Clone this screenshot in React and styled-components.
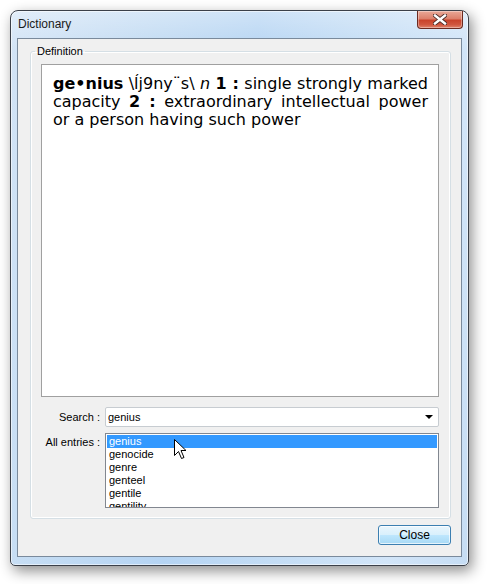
import React from "react";
import styled, { createGlobalStyle } from "styled-components";

const GlobalStyle = createGlobalStyle`
  body {
    margin: 0;
    background: #fff;
    font-family: "Liberation Sans", Arial, sans-serif;
  }
`;

const Page = styled.div`
  position: relative;
  width: 488px;
  height: 584px;
  padding: 10px 0 0 10px;
  box-sizing: border-box;
`;

const Window = styled.div`
  width: 459px;
  height: 556px;
  box-sizing: border-box;
  display: flex;
  flex-direction: column;
  padding: 0 6px 8px 6px;
  border: 1px solid #3b4049;
  border-radius: 8px 8px 5px 5px;
  background: linear-gradient(
      to bottom,
      rgba(255, 255, 255, 0.35),
      rgba(255, 255, 255, 0) 40px
    ),
    linear-gradient(
      100deg,
      #d3e4f6 0%,
      #c2dbf3 25%,
      #b5d4f3 45%,
      #c4ddf5 65%,
      #d2e5f8 85%,
      #c6ddf4 100%
    );
  box-shadow: inset 0 0 0 1px rgba(255, 255, 255, 0.55),
    3px 5px 14px rgba(0, 0, 0, 0.45);
`;

const TitleBar = styled.div`
  height: 27px;
  display: flex;
  justify-content: space-between;
  align-items: flex-start;
`;

const Title = styled.span`
  padding: 6px 0 0 1px;
  font-size: 12px;
  line-height: 15px;
  color: #1a1a1a;
`;

const CaptionClose = styled.div`
  width: 46px;
  height: 18px;
  box-sizing: border-box;
  margin-right: -1px;
  display: flex;
  align-items: center;
  justify-content: center;
  border: 1px solid #6b2a20;
  border-top: none;
  border-radius: 0 0 4px 4px;
  background: linear-gradient(
    to bottom,
    #e9a897 0%,
    #dc806b 45%,
    #c9432b 55%,
    #d0563e 80%,
    #e0846c 100%
  );
  box-shadow: inset 0 0 0 1px rgba(255, 255, 255, 0.35);
`;

const Client = styled.div`
  flex: 1;
  display: flex;
  flex-direction: column;
  background: #f0f0f0;
  border: 1px solid #7a8a9c;
  padding: 6px 10px 0 12px;
`;

const GroupBox = styled.fieldset`
  margin: 0;
  padding: 0;
  border: 1px solid #d5dfe5;
  border-radius: 3px;
  box-shadow: inset 0 0 0 1px #fff;
`;

const Legend = styled.legend`
  margin-left: 4px;
  padding: 0 2px;
  font-size: 11px;
  line-height: 13px;
  color: #000;
`;

const GroupInner = styled.div`
  display: flex;
  flex-direction: column;
  padding: 6px 11px 10px 10px;
`;

const Definition = styled.div`
  height: 333px;
  box-sizing: border-box;
  border: 1px solid #a0a0a0;
  background: #fff;
  padding: 10px 10px 0 11px;
  font-family: "DejaVu Sans", Verdana, sans-serif;
  font-size: 16px;
  line-height: 18px;
  text-align: justify;
  color: #000;
`;

const Headword = styled.b`
  font-weight: bold;
`;

const Row = styled.div`
  display: flex;
  align-items: ${(p) => (p.$top ? "flex-start" : "center")};
  margin-top: ${(p) => p.$gap}px;
`;

const Label = styled.span`
  width: 59px;
  margin-right: 5px;
  flex-shrink: 0;
  text-align: right;
  font-size: 11px;
  line-height: 13px;
  white-space: nowrap;
  padding-top: ${(p) => (p.$top ? "3px" : "0")};
`;

const Combo = styled.div`
  flex: 1;
  height: 20px;
  box-sizing: border-box;
  display: flex;
  align-items: center;
  justify-content: space-between;
  padding: 0 5px 0 2px;
  border: 1px solid #c7ccd1;
  border-radius: 2px;
  background: #fff;
  font-size: 11px;
`;

const Arrow = styled.span`
  width: 0;
  height: 0;
  border-left: 4px solid transparent;
  border-right: 4px solid transparent;
  border-top: 4px solid #000;
`;

const ListBox = styled.div`
  flex: 1;
  height: 75px;
  box-sizing: border-box;
  overflow: hidden;
  padding: 1px;
  border: 1px solid #828790;
  background: #fff;
`;

const Item = styled.div`
  height: 13px;
  line-height: 13px;
  padding-left: 2px;
  font-size: 11px;
  color: ${(p) => (p.$selected ? "#fff" : "#000")};
  background: ${(p) => (p.$selected ? "#3399ff" : "transparent")};
`;

const Footer = styled.div`
  display: flex;
  justify-content: flex-end;
  padding-top: 6px;
`;

const Button = styled.button`
  width: 73px;
  height: 20px;
  padding: 0;
  border: 1px solid #3c7fb1;
  border-radius: 3px;
  background: linear-gradient(
    to bottom,
    #eaf6fd 0%,
    #d9f0fc 48%,
    #bee6fd 52%,
    #a7d9f5 100%
  );
  box-shadow: inset 0 0 0 1px rgba(255, 255, 255, 0.7);
  font-family: "Liberation Sans", Arial, sans-serif;
  font-size: 12px;
  color: #000;
`;

const Cursor = styled.svg`
  position: absolute;
  left: 174px;
  top: 439px;
`;

const entries = ["genius", "genocide", "genre", "genteel", "gentile", "gentility"];

const App = () => {
  return (
    <Page>
      <GlobalStyle />
      <Window>
        <TitleBar>
          <Title>Dictionary</Title>
          <CaptionClose>
            <svg width="14" height="11" viewBox="0 0 14 11">
              <path
                d="M2 1.5 L12 9.5 M12 1.5 L2 9.5"
                stroke="#4a2a26"
                strokeWidth="4.2"
                strokeLinecap="square"
              />
              <path
                d="M2 1.5 L12 9.5 M12 1.5 L2 9.5"
                stroke="#fff"
                strokeWidth="2.4"
                strokeLinecap="square"
              />
            </svg>
          </CaptionClose>
        </TitleBar>
        <Client>
          <GroupBox>
            <Legend>Definition</Legend>
            <GroupInner>
              <Definition>
                <Headword>ge•nius</Headword> \ĺj9ny¨s\ <i>n</i>{" "}
                <Headword>1 :</Headword> single strongly marked capacity{" "}
                <Headword>2 :</Headword> extraordinary intellectual power or a
                person having such power
              </Definition>
              <Row $gap={10}>
                <Label>Search :</Label>
                <Combo>
                  <span>genius</span>
                  <Arrow />
                </Combo>
              </Row>
              <Row $gap={6} $top>
                <Label $top>All entries :</Label>
                <ListBox>
                  {entries.map((word, i) => (
                    <Item key={word} $selected={i === 0}>
                      {word}
                    </Item>
                  ))}
                </ListBox>
              </Row>
            </GroupInner>
          </GroupBox>
          <Footer>
            <Button>Close</Button>
          </Footer>
        </Client>
      </Window>
      <Cursor width="13" height="21" viewBox="0 0 13 21">
        <path
          d="M0.5 0.5 L0.5 16.5 L4.5 12.5 L7.5 19.5 L10 18.5 L7 11.5 L12 11.5 Z"
          fill="#fff"
          stroke="#000"
          strokeWidth="1"
        />
      </Cursor>
    </Page>
  );
};

export default App;
